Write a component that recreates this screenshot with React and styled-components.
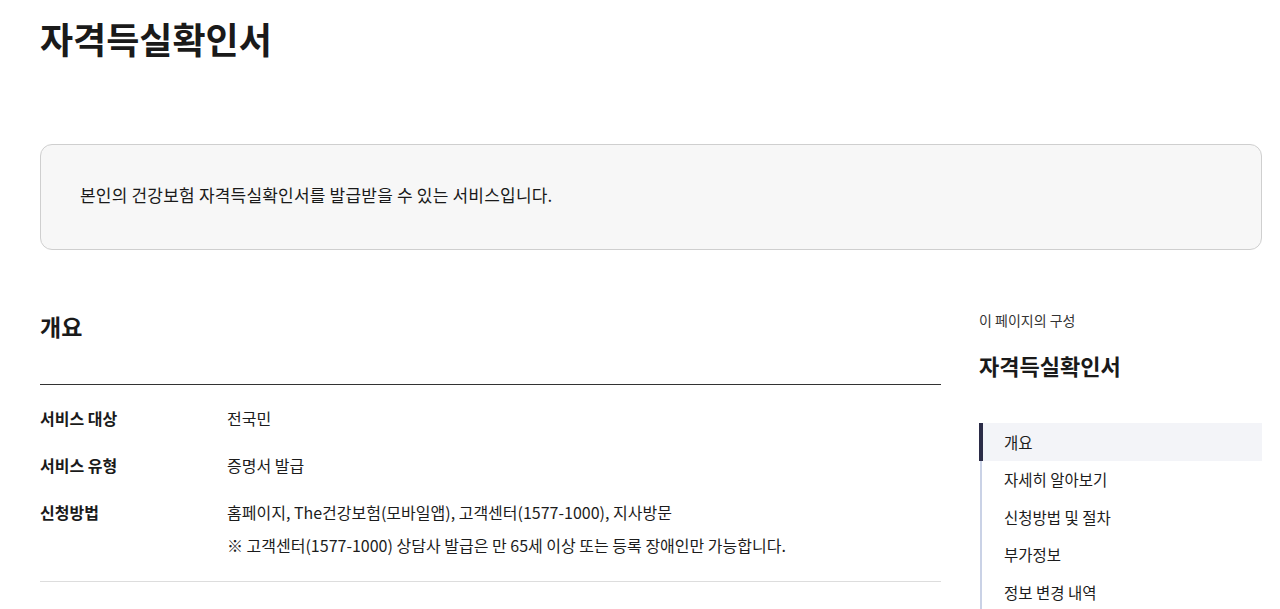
import React from 'react';
import styled, { createGlobalStyle } from 'styled-components';

const GlobalStyle = createGlobalStyle`
	html, body {
		margin: 0;
		padding: 0;
		background: #ffffff;
	}
	body {
		font-family: 'Noto Sans CJK KR', 'Noto Sans', sans-serif;
		color: #1c1c1c;
	}
	* {
		box-sizing: border-box;
	}
`;

const overview = [
	{ label: '서비스 대상', values: ['전국민'] },
	{ label: '서비스 유형', values: ['증명서 발급'] },
	{
		label: '신청방법',
		values: [
			'홈페이지, The건강보험(모바일앱), 고객센터(1577-1000), 지사방문',
			'※  고객센터(1577-1000) 상담사 발급은 만 65세 이상 또는 등록 장애인만 가능합니다.',
		],
	},
];

const toc = ['개요', '자세히 알아보기', '신청방법 및 절차', '부가정보', '정보 변경 내역'];

function App() {
	return (
		<>
			<GlobalStyle />
			<Page>
				<Title>자격득실확인서</Title>
				<Summary>본인의 건강보험 자격득실확인서를 발급받을 수 있는 서비스입니다.</Summary>
				<Body>
					<Main>
						<SectionTitle>개요</SectionTitle>
						<InfoList>
							{overview.map((row) => (
								<InfoRow key={row.label}>
									<InfoLabel>{row.label}</InfoLabel>
									<InfoValue>
										{row.values.map((v, i) => (
											<ValueLine key={i}>{v}</ValueLine>
										))}
									</InfoValue>
								</InfoRow>
							))}
						</InfoList>
					</Main>
					<Aside>
						<AsideLabel>이 페이지의 구성</AsideLabel>
						<AsideTitle>자격득실확인서</AsideTitle>
						<TocList>
							{toc.map((item, i) => (
								<TocItem key={item} $active={i === 0}>
									{item}
								</TocItem>
							))}
						</TocList>
					</Aside>
				</Body>
			</Page>
		</>
	);
}

const Page = styled.div`
	padding: 16px 18px 0 40px;
	width: 1280px;
`;

const Title = styled.h1`
	margin: 0;
	font-size: 36px;
	font-weight: 700;
	line-height: 44px;
	color: #1a1a1a;
`;

const Summary = styled.div`
	margin-top: 84px;
	padding: 38px 39px 42px;
	border: 1px solid #cfcfcf;
	border-radius: 12px;
	background: #f7f7f7;
	font-size: 17px;
	line-height: 24px;
	letter-spacing: 0.2px;
	color: #1a1a1a;
`;

const Body = styled.div`
	display: grid;
	grid-template-columns: 901px 1fr;
	column-gap: 38px;
	margin-top: 62px;
`;

const Main = styled.section``;

const SectionTitle = styled.h2`
	margin: 0;
	padding-bottom: 44px;
	border-bottom: 1px solid #333333;
	font-size: 23px;
	font-weight: 700;
	line-height: 28px;
	color: #1a1a1a;
`;

const InfoList = styled.div`
	display: flex;
	flex-direction: column;
	gap: 23px;
	padding: 21px 0 24px;
	border-bottom: 1px solid #dddddd;
`;

const InfoRow = styled.div`
	display: flex;
	font-size: 16px;
	line-height: 24px;
`;

const InfoLabel = styled.div`
	width: 187px;
	flex-shrink: 0;
	font-weight: 700;
	color: #1a1a1a;
`;

const InfoValue = styled.div`
	display: flex;
	flex-direction: column;
	gap: 9px;
	color: #1c1c1c;
`;

const ValueLine = styled.div``;

const Aside = styled.aside``;

const AsideLabel = styled.div`
	font-size: 14px;
	line-height: 16px;
	color: #333333;
`;

const AsideTitle = styled.div`
	margin-top: 23px;
	font-size: 22px;
	font-weight: 700;
	line-height: 28px;
	color: #1a1a1a;
`;

const TocList = styled.ul`
	list-style: none;
	margin: 44px 0 0 1px;
	padding: 0;
	border-left: 2px solid #cad2e6;
`;

const TocItem = styled.li`
	position: relative;
	padding: 7.5px 0 7.5px 22px;
	font-size: 15.5px;
	line-height: 22.5px;
	color: #1c1c1c;
	background: ${(p) => (p.$active ? '#f3f4f8' : 'transparent')};

	&::before {
		content: '';
		display: ${(p) => (p.$active ? 'block' : 'none')};
		position: absolute;
		left: -3px;
		top: 0;
		bottom: 0;
		width: 4px;
		background: #2b2c47;
	}
`;

export default App;
